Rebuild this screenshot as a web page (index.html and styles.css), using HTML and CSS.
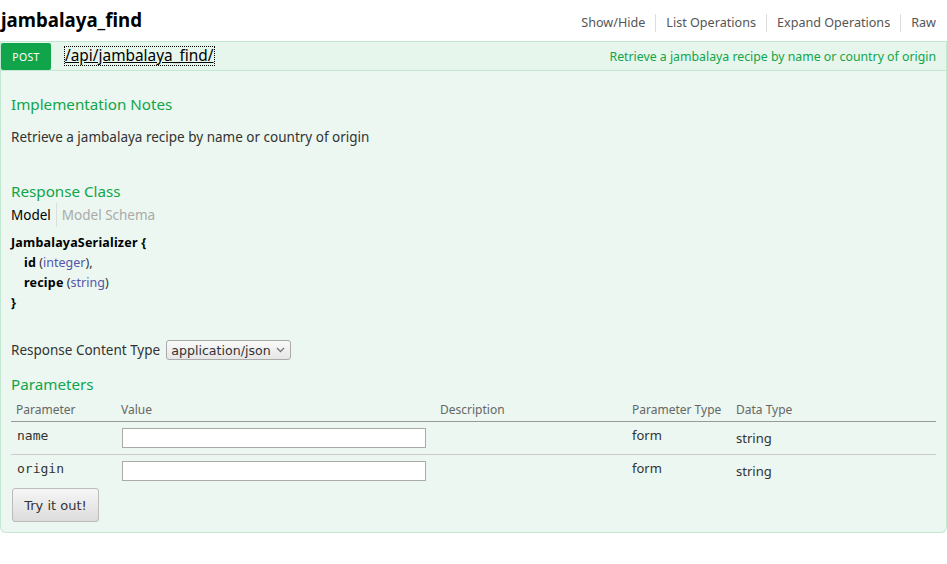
FILE: index.html
```html
<!DOCTYPE html>
<html>
<head>
<meta charset="utf-8">
<link rel="stylesheet" href="styles.css">
</head>
<body>
<div class="resource">
  <div class="res-heading">
    <h2 class="res-title">jambalaya_find</h2>
    <ul class="res-options">
      <li>Show/Hide</li>
      <li>List Operations</li>
      <li>Expand Operations</li>
      <li class="last">Raw</li>
    </ul>
  </div>
  <div class="operation">
    <div class="op-heading">
      <span class="method">POST</span>
      <a class="path" href="#">/api/jambalaya_find/</a>
      <span class="summary">Retrieve a jambalaya recipe by name or country of origin</span>
    </div>
    <div class="op-content">
      <h4 class="sec-title first">Implementation Notes</h4>
      <p class="notes">Retrieve a jambalaya recipe by name or country of origin</p>

      <h4 class="sec-title resp">Response Class</h4>
      <div class="tabs">
        <span class="tab active">Model</span>
        <span class="tab inactive">Model Schema</span>
      </div>
      <div class="signature">
        <div class="sig-line"><strong>JambalayaSerializer {</strong></div>
        <div class="sig-line indent"><strong>id</strong> (<span class="prop-type">integer</span>),</div>
        <div class="sig-line indent"><strong>recipe</strong> (<span class="prop-type">string</span>)</div>
        <div class="sig-line"><strong>}</strong></div>
      </div>

      <div class="content-type">
        <span class="ct-label">Response Content Type</span>
        <span class="select">application/json
          <svg class="chev" width="9" height="6" viewBox="0 0 9 6"><path d="M1 1 L4.5 4.5 L8 1" fill="none" stroke="#777" stroke-width="1.3"/></svg>
        </span>
      </div>

      <h4 class="sec-title params">Parameters</h4>
      <table class="param-table">
        <colgroup>
          <col class="c1"><col class="c2"><col class="c3"><col class="c4"><col class="c5">
        </colgroup>
        <thead>
          <tr><th>Parameter</th><th>Value</th><th>Description</th><th>Parameter Type</th><th>Data Type</th></tr>
        </thead>
        <tbody>
          <tr class="row-sep">
            <td class="pname">name</td>
            <td><span class="input"></span></td>
            <td></td>
            <td class="ptype">form</td>
            <td><span class="dtype">string</span></td>
          </tr>
          <tr>
            <td class="pname">origin</td>
            <td><span class="input"></span></td>
            <td></td>
            <td class="ptype">form</td>
            <td><span class="dtype">string</span></td>
          </tr>
        </tbody>
      </table>
      <div class="submit-row">
        <span class="button">Try it out!</span>
      </div>
    </div>
  </div>
</div>
</body>
</html>
```
FILE: styles.css
```css
html, body {
  margin: 0;
  padding: 0;
  background: #fff;
}
body {
  font-family: "Noto Sans", "Open Sans", sans-serif;
  color: #333;
}
.resource {
  width: 947px;
}
.res-heading {
  display: flex;
  align-items: baseline;
  justify-content: space-between;
  height: 41px;
  box-sizing: border-box;
  padding-top: 8px;
}
.res-title {
  margin: 0;
  padding-left: 1px;
  font-size: 18.7px;
  line-height: 24px;
  font-weight: bold;
  color: #000;
}
.res-options {
  display: flex;
  list-style: none;
  margin: 0;
  padding: 0 11px 0 0;
}
.res-options li {
  font-size: 12.6px;
  line-height: 18px;
  color: #555;
  padding: 0 10px;
  border-right: 1px solid #ddd;
}
.res-options li.last {
  border-right: none;
  padding-right: 0;
}
.op-heading {
  display: flex;
  align-items: center;
  height: 30px;
  box-sizing: border-box;
  background: #e7f6ec;
  border: 1px solid #c3e8d1;
}
.method {
  width: 50px;
  height: 27px;
  background: #10a54a;
  color: #fff;
  border-radius: 2px;
  font-size: 10.5px;
  line-height: 28px;
  text-align: center;
  letter-spacing: 0.3px;
}
.path {
  margin-left: 14px;
  font-size: 15.4px;
  line-height: 18px;
  color: #000;
  text-decoration: underline;
  outline: 1px dotted #000;
  outline-offset: 0;
}
.summary {
  margin-left: auto;
  margin-right: 10px;
  font-size: 12.3px;
  color: #10a54a;
}
.op-content {
  background: #ebf7f0;
  border: 1px solid #c3e8d1;
  border-top: none;
  border-radius: 0 0 6px 6px;
  padding: 10px;
}
.sec-title {
  margin: 0;
  font-size: 15.2px;
  line-height: 20px;
  font-weight: normal;
  color: #10a54a;
}
.sec-title.first { margin-top: 13px; }
.notes {
  margin: 14px 0 0 0;
  font-size: 13.5px;
  line-height: 18px;
  color: #333;
}
.sec-title.resp { margin-top: 35px; }
.tabs {
  display: flex;
  margin-top: 2px;
}
.tab {
  font-size: 13.5px;
  line-height: 18px;
  padding: 3px 0;
}
.tab.active {
  color: #000;
  padding-right: 5px;
}
.tab.inactive {
  color: #aaa;
  border-left: 1px solid #ddd;
  padding-left: 5px;
}
.signature {
  margin-top: 6px;
  font-size: 12.5px;
  color: #333;
}
.sig-line {
  line-height: 20px;
}
.sig-line strong {
  color: #000;
  font-weight: bold;
  letter-spacing: 0.2px;
}
.sig-line.indent {
  padding-left: 13px;
}
.prop-type {
  color: #55a;
}
.content-type {
  display: flex;
  align-items: center;
  margin-top: 27px;
  height: 20px;
}
.ct-label {
  font-size: 13.5px;
  line-height: 20px;
  color: #333;
}
.select {
  display: inline-flex;
  align-items: center;
  margin-left: 6px;
  height: 20px;
  box-sizing: border-box;
  padding: 0 5px 0 4px;
  border: 1px solid #aaa;
  border-radius: 3px;
  background: linear-gradient(#fafafa, #e6e6e6);
  font-family: "DejaVu Sans", sans-serif;
  font-size: 12.6px;
  color: #333;
}
.chev {
  margin-left: 5px;
}
.sec-title.params { margin-top: 14px; }
.param-table {
  width: 925px;
  border-collapse: collapse;
  table-layout: fixed;
}
.c1 { width: 105px; }
.c2 { width: 319px; }
.c3 { width: 192px; }
.c4 { width: 104px; }
.param-table th {
  text-align: left;
  font-weight: normal;
  font-size: 12px;
  line-height: 16px;
  color: #666;
  padding: 8px 5px 3px 5px;
  border-bottom: 1px solid #999;
}
.param-table td {
  vertical-align: top;
  padding: 6px 5px;
  font-size: 13px;
}
.row-sep td {
  border-bottom: 1px solid #ccc;
}
.pname {
  font-family: "DejaVu Sans Mono", monospace;
  font-size: 13px;
  line-height: 16px;
  color: #333;
}
.pname { padding-left: 6px !important; }
.input {
  display: block;
  width: 304px;
  height: 20px;
  box-sizing: border-box;
  border: 1px solid #aaa;
  background: #fff;
  margin-left: 1px;
}
.ptype {
  line-height: 14px;
  color: #333;
}
.dtype {
  display: block;
  line-height: 20px;
  color: #333;
}
.submit-row {
  margin-top: 1px;
}
.button {
  display: inline-flex;
  align-items: center;
  justify-content: center;
  width: 87px;
  height: 34px;
  box-sizing: border-box;
  margin-left: 1px;
  border: 1px solid #bbb;
  border-radius: 3px;
  background: linear-gradient(#f6f6f6, #dcdcdc);
  font-family: "DejaVu Sans", sans-serif;
  font-size: 13px;
  color: #333;
}
```
